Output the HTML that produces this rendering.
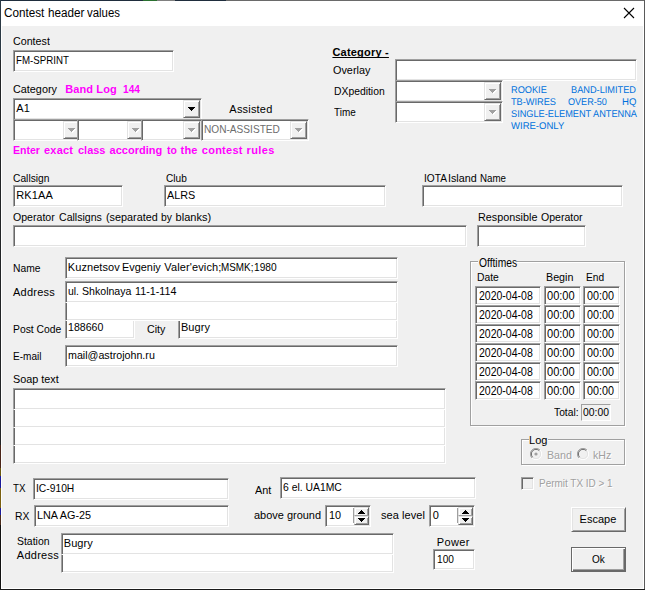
<!DOCTYPE html>
<html lang="en"><head><meta charset="utf-8"><title>Contest header values</title>
<style>
html,body{margin:0;padding:0;}
body{width:645px;height:590px;overflow:hidden;background:#f0f0f0;font-family:"Liberation Sans",Arial,sans-serif;}
#win{position:absolute;left:0;top:0;width:645px;height:590px;background:#f0f0f0;overflow:hidden;}
#win div,#win span,#win svg{position:absolute;box-sizing:border-box;}
.t{white-space:pre;color:#000;}
.mag{color:#ff00ff;}
.blue{color:#0070dc;text-rendering:geometricPrecision;}
.dis{color:#6d6d6d;}
.gray{color:#a0a0a0;text-shadow:1px 1px 0 #fff;}
.ul{text-decoration:underline;text-decoration-skip-ink:none;}
.title{color:#000;}
.inp{background:#fff;border:1px solid;border-color:#a0a0a0 #fff #fff #a0a0a0;box-shadow:inset 1px 1px 0 #696969,inset -1px -1px 0 #e3e3e3;}
.nt{background:#fff;border:1px solid;border-top:none;border-color:#a0a0a0 #fff #fff #a0a0a0;box-shadow:inset 1px 0 0 #696969,inset -1px -1px 0 #e3e3e3;}
.ro{background:#f0f0f0;}
.cb{background:#f0f0f0;border:1px solid;border-color:#e3e3e3 #696969 #696969 #e3e3e3;box-shadow:inset 1px 1px 0 #fff,inset -1px -1px 0 #a0a0a0;}
.btn{background:#f0f0f0;border:1px solid;border-color:#fff #696969 #696969 #fff;box-shadow:inset 1px 1px 0 #e3e3e3,inset -1px -1px 0 #a0a0a0;}
.grp{border:1px solid #a0a0a0;box-shadow:inset 1px 1px 0 #fff,1px 1px 0 #fff;}
.gl{background:#f0f0f0;}
.tb{background:#fff;}
.s1{background:#f0f0f0;border:1px solid;border-color:#a0a0a0 #fff #fff #a0a0a0;}
.btnd{background:#f0f0f0;border:1px solid #696969;box-shadow:inset 1px 1px 0 #fff,inset -1px -1px 0 #696969,inset -2px -2px 0 #a0a0a0;}
.cbu{background:#f0f0f0;border:1px solid;border-color:#e3e3e3 #696969 #a0a0a0 #e3e3e3;box-shadow:inset 1px 1px 0 #fff,inset -1px 0 0 #a0a0a0;}

</style></head>
<body>
<div id="win">
<div class="inp" style="left:13px;top:50px;width:161px;height:22px;"></div>
<div class="tb" style="left:0;top:0;width:645px;height:26px;"></div>
<div style="left:1px;top:1px;width:1px;height:588px;background:#fff"></div>
<div style="left:643px;top:1px;width:1px;height:588px;background:#fff"></div>
<div style="left:1px;top:588px;width:643px;height:1px;background:#fff"></div>
<div style="left:0;top:0;width:645px;height:1px;background:linear-gradient(90deg,#1f2d3d 0,#1f2d3d 143px,#2a7030 143px,#2a7030 157px,#808080 157px,#808080 175px,#1f2d3d 175px,#1f2d3d 226px,#6a6a6a 226px,#6a6a6a 645px)"></div>
<div style="left:0;top:0;width:1px;height:590px;background:linear-gradient(180deg,#2b3944 0px,#2b3944 60px,#222426 60px,#222426 445px,#4a2418 445px,#4a2418 468px,#6b5a10 468px,#6b5a10 476px,#1a1a9a 476px,#1a1a9a 488px,#7a6010 488px,#7a6010 508px,#1a1a9a 508px,#1a1a9a 515px,#4a2a1a 515px,#4a2a1a 525px,#101010 525px,#101010 590px)"></div>
<div style="left:644px;top:0;width:1px;height:590px;background:#5a5a5a"></div>
<div style="left:0;top:589px;width:645px;height:1px;background:#1a1a1a"></div>
<svg style="left:623px;top:7px" width="12" height="12" viewBox="0 0 12 12"><path d="M1 1L11 11M11 1L1 11" stroke="#000" stroke-width="1.1" fill="none"/></svg>
<div class="inp" style="left:13px;top:98px;width:189px;height:22px;"></div>
<div class="cb" style="left:183px;top:100px;width:17px;height:18px;"></div>
<svg style="left:188px;top:107px" width="8" height="5" viewBox="0 0 8 5" shape-rendering="crispEdges"><path d="M0 0h7v1h-1v1h-1v1h-1v1h-1v-1h-1v-1h-1v-1h-1z" fill="#000"/></svg>
<div class="inp" style="left:13px;top:119px;width:69px;height:22px;"></div>
<div class="cb" style="left:63px;top:121px;width:17px;height:18px;"></div>
<svg style="left:68px;top:128px" width="8" height="5" viewBox="0 0 8 5" shape-rendering="crispEdges"><path transform="translate(1,1)" d="M0 0h7v1h-1v1h-1v1h-1v1h-1v-1h-1v-1h-1v-1h-1z" fill="#fff"/><path d="M0 0h7v1h-1v1h-1v1h-1v1h-1v-1h-1v-1h-1v-1h-1z" fill="#a0a0a0"/></svg>
<div class="inp" style="left:77px;top:119px;width:69px;height:22px;"></div>
<div class="cb" style="left:127px;top:121px;width:17px;height:18px;"></div>
<svg style="left:132px;top:128px" width="8" height="5" viewBox="0 0 8 5" shape-rendering="crispEdges"><path transform="translate(1,1)" d="M0 0h7v1h-1v1h-1v1h-1v1h-1v-1h-1v-1h-1v-1h-1z" fill="#fff"/><path d="M0 0h7v1h-1v1h-1v1h-1v1h-1v-1h-1v-1h-1v-1h-1z" fill="#a0a0a0"/></svg>
<div class="inp" style="left:141px;top:119px;width:61px;height:22px;"></div>
<div class="cb" style="left:183px;top:121px;width:17px;height:18px;"></div>
<svg style="left:188px;top:128px" width="8" height="5" viewBox="0 0 8 5" shape-rendering="crispEdges"><path transform="translate(1,1)" d="M0 0h7v1h-1v1h-1v1h-1v1h-1v-1h-1v-1h-1v-1h-1z" fill="#fff"/><path d="M0 0h7v1h-1v1h-1v1h-1v1h-1v-1h-1v-1h-1v-1h-1z" fill="#a0a0a0"/></svg>
<div class="inp" style="left:201px;top:119px;width:108px;height:22px;"></div>
<div class="cb" style="left:290px;top:121px;width:17px;height:18px;"></div>
<svg style="left:295px;top:128px" width="8" height="5" viewBox="0 0 8 5" shape-rendering="crispEdges"><path transform="translate(1,1)" d="M0 0h7v1h-1v1h-1v1h-1v1h-1v-1h-1v-1h-1v-1h-1z" fill="#fff"/><path d="M0 0h7v1h-1v1h-1v1h-1v1h-1v-1h-1v-1h-1v-1h-1z" fill="#a0a0a0"/></svg>
<div class="inp" style="left:395px;top:59px;width:242px;height:22px;"></div>
<div class="inp" style="left:395px;top:80px;width:108px;height:22px;"></div>
<div class="cb" style="left:484px;top:82px;width:17px;height:18px;"></div>
<svg style="left:489px;top:89px" width="8" height="5" viewBox="0 0 8 5" shape-rendering="crispEdges"><path transform="translate(1,1)" d="M0 0h7v1h-1v1h-1v1h-1v1h-1v-1h-1v-1h-1v-1h-1z" fill="#fff"/><path d="M0 0h7v1h-1v1h-1v1h-1v1h-1v-1h-1v-1h-1v-1h-1z" fill="#a0a0a0"/></svg>
<div class="inp" style="left:395px;top:101px;width:108px;height:22px;"></div>
<div class="cb" style="left:484px;top:103px;width:17px;height:18px;"></div>
<svg style="left:489px;top:110px" width="8" height="5" viewBox="0 0 8 5" shape-rendering="crispEdges"><path transform="translate(1,1)" d="M0 0h7v1h-1v1h-1v1h-1v1h-1v-1h-1v-1h-1v-1h-1z" fill="#fff"/><path d="M0 0h7v1h-1v1h-1v1h-1v1h-1v-1h-1v-1h-1v-1h-1z" fill="#a0a0a0"/></svg>
<div class="inp" style="left:13px;top:185px;width:110px;height:22px;"></div>
<div class="inp" style="left:164px;top:185px;width:222px;height:22px;"></div>
<div class="inp" style="left:422px;top:185px;width:201px;height:22px;"></div>
<div class="inp" style="left:13px;top:225px;width:454px;height:22px;"></div>
<div class="inp" style="left:477px;top:225px;width:109px;height:22px;"></div>
<div class="inp" style="left:65px;top:257px;width:333px;height:22px;"></div>
<div class="inp" style="left:65px;top:281px;width:333px;height:22px;"></div>
<div class="nt" style="left:65px;top:303px;width:333px;height:18px;"></div>
<div class="nt" style="left:65px;top:321px;width:70px;height:18px;"></div>
<div class="nt" style="left:178px;top:321px;width:220px;height:18px;"></div>
<div class="inp" style="left:65px;top:345px;width:333px;height:22px;"></div>
<div class="inp" style="left:13px;top:388px;width:433px;height:22px;"></div>
<div class="nt" style="left:13px;top:410px;width:433px;height:18px;"></div>
<div class="nt" style="left:13px;top:428px;width:433px;height:18px;"></div>
<div class="nt" style="left:13px;top:446px;width:433px;height:18px;"></div>
<div class="inp" style="left:33px;top:478px;width:196px;height:22px;"></div>
<div class="inp" style="left:34px;top:505px;width:195px;height:22px;"></div>
<div class="inp" style="left:61px;top:533px;width:333px;height:22px;"></div>
<div class="nt" style="left:61px;top:555px;width:333px;height:18px;"></div>
<div class="inp" style="left:280px;top:477px;width:196px;height:22px;"></div>
<div class="inp" style="left:325px;top:505px;width:46px;height:22px;"></div>
<div class="cbu" style="left:354px;top:507px;width:15px;height:9px;"></div>
<div class="cb" style="left:354px;top:516px;width:15px;height:9px;"></div>
<div style="left:353px;top:508px;width:1px;height:15px;background:#a0a0a0"></div>
<svg style="left:358px;top:510px" width="7" height="4" viewBox="0 0 7 4" shape-rendering="crispEdges"><path d="M3 0h1v1h1v1h1v1h1v1h-7v-1h1v-1h1v-1h1z" fill="#000"/></svg>
<svg style="left:358px;top:518px" width="7" height="4" viewBox="0 0 7 4" shape-rendering="crispEdges"><path d="M0 0h7v1h-1v1h-1v1h-1v1h-1v-1h-1v-1h-1v-1h-1z" fill="#000"/></svg>
<div class="inp" style="left:429px;top:505px;width:46px;height:22px;"></div>
<div class="cbu" style="left:458px;top:507px;width:15px;height:9px;"></div>
<div class="cb" style="left:458px;top:516px;width:15px;height:9px;"></div>
<div style="left:457px;top:508px;width:1px;height:15px;background:#a0a0a0"></div>
<svg style="left:462px;top:510px" width="7" height="4" viewBox="0 0 7 4" shape-rendering="crispEdges"><path d="M3 0h1v1h1v1h1v1h1v1h-7v-1h1v-1h1v-1h1z" fill="#000"/></svg>
<svg style="left:462px;top:518px" width="7" height="4" viewBox="0 0 7 4" shape-rendering="crispEdges"><path d="M0 0h7v1h-1v1h-1v1h-1v1h-1v-1h-1v-1h-1v-1h-1z" fill="#000"/></svg>
<div class="inp" style="left:433px;top:549px;width:42px;height:21px;"></div>
<div class="grp" style="left:470px;top:261px;width:155px;height:165px"></div>
<div class="gl" style="left:478px;top:258px;width:39px;height:8px"></div>
<div class="inp" style="left:475px;top:286px;width:66px;height:19px;"></div>
<div class="inp" style="left:544px;top:286px;width:37px;height:19px;"></div>
<div class="inp" style="left:583px;top:286px;width:37px;height:19px;"></div>
<div class="inp" style="left:475px;top:305px;width:66px;height:19px;"></div>
<div class="inp" style="left:544px;top:305px;width:37px;height:19px;"></div>
<div class="inp" style="left:583px;top:305px;width:37px;height:19px;"></div>
<div class="inp" style="left:475px;top:324px;width:66px;height:19px;"></div>
<div class="inp" style="left:544px;top:324px;width:37px;height:19px;"></div>
<div class="inp" style="left:583px;top:324px;width:37px;height:19px;"></div>
<div class="inp" style="left:475px;top:343px;width:66px;height:19px;"></div>
<div class="inp" style="left:544px;top:343px;width:37px;height:19px;"></div>
<div class="inp" style="left:583px;top:343px;width:37px;height:19px;"></div>
<div class="inp" style="left:475px;top:362px;width:66px;height:19px;"></div>
<div class="inp" style="left:544px;top:362px;width:37px;height:19px;"></div>
<div class="inp" style="left:583px;top:362px;width:37px;height:19px;"></div>
<div class="inp" style="left:475px;top:381px;width:66px;height:19px;"></div>
<div class="inp" style="left:544px;top:381px;width:37px;height:19px;"></div>
<div class="inp" style="left:583px;top:381px;width:37px;height:19px;"></div>
<div class="s1" style="left:581px;top:404px;width:30px;height:17px;"></div>
<div class="grp" style="left:521px;top:439px;width:104px;height:26px"></div>
<div class="gl" style="left:529px;top:436px;width:19px;height:8px"></div>
<svg style="left:530px;top:448px" width="12" height="12" viewBox="0 0 12 12"><circle cx="6" cy="6" r="5.5" fill="#f0f0f0"/><path d="M10 2A5.5 5.5 0 1 0 2 10" stroke="#a0a0a0" stroke-width="1" fill="none"/><path d="M10 2A5.5 5.5 0 0 1 2 10" stroke="#fff" stroke-width="1" fill="none"/><path d="M9.3 2.7A4.5 4.5 0 1 0 2.7 9.3" stroke="#696969" stroke-width="1" fill="none"/><path d="M9.3 2.7A4.5 4.5 0 0 1 2.7 9.3" stroke="#e3e3e3" stroke-width="1" fill="none"/><circle cx="6" cy="6" r="1.6" fill="#a0a0a0"/></svg>
<svg style="left:577px;top:448px" width="12" height="12" viewBox="0 0 12 12"><circle cx="6" cy="6" r="5.5" fill="#f0f0f0"/><path d="M10 2A5.5 5.5 0 1 0 2 10" stroke="#a0a0a0" stroke-width="1" fill="none"/><path d="M10 2A5.5 5.5 0 0 1 2 10" stroke="#fff" stroke-width="1" fill="none"/><path d="M9.3 2.7A4.5 4.5 0 1 0 2.7 9.3" stroke="#696969" stroke-width="1" fill="none"/><path d="M9.3 2.7A4.5 4.5 0 0 1 2.7 9.3" stroke="#e3e3e3" stroke-width="1" fill="none"/></svg>
<div class="inp ro" style="left:521px;top:477px;width:13px;height:13px;"></div>
<div class="btn" style="left:571px;top:507px;width:55px;height:25px;"></div>
<div class="btnd" style="left:571px;top:547px;width:55px;height:25px;"></div>
<span class="t" style="left:16.32px;top:53px;font-size:11px;line-height:14px;transform:scaleX(0.8819);transform-origin:0 0;">FM-SPRINT</span>
<span class="t" style="left:13.28px;top:34px;font-size:11px;line-height:14px;transform:scaleX(0.9725);transform-origin:0 0;">Contest</span>
<span class="t title" style="left:4.05px;top:6px;font-size:12px;line-height:15px;transform:scaleX(0.9757);transform-origin:0 0;">Contest</span>
<span class="t title" style="left:47.52px;top:6px;font-size:12px;line-height:15px;transform:scaleX(0.9750);transform-origin:0 0;">header</span>
<span class="t title" style="left:86.87px;top:6px;font-size:12px;line-height:15px;transform:scaleX(0.9500);transform-origin:0 0;">values</span>
<span class="t" style="left:12.98px;top:82px;font-size:11px;line-height:14px;transform:scaleX(0.9838);transform-origin:0 0;">Category</span>
<span class="t mag" style="left:65.14px;top:82px;font-size:11px;line-height:14px;font-weight:bold;letter-spacing:0.123px;">Band Log</span>
<span class="t mag" style="left:122.64px;top:82px;font-size:11px;line-height:14px;font-weight:bold;transform:scaleX(0.9210);transform-origin:0 0;">144</span>
<span class="t" style="left:16.36px;top:101px;font-size:11px;line-height:14px;">A1</span>
<span class="t" style="left:229.36px;top:102px;font-size:11px;line-height:14px;letter-spacing:0.191px;">Assisted</span>
<span class="t dis" style="left:203.88px;top:122px;font-size:11px;line-height:14px;transform:scaleX(0.9201);transform-origin:0 0;">NON-ASSISTED</span>
<span class="t mag" style="left:13.17px;top:143px;font-size:11px;line-height:14px;font-weight:bold;transform:scaleX(0.9588);transform-origin:0 0;">Enter</span>
<span class="t mag" style="left:44.10px;top:143px;font-size:11px;line-height:14px;font-weight:bold;letter-spacing:0.150px;">exact</span>
<span class="t mag" style="left:77.80px;top:143px;font-size:11px;line-height:14px;font-weight:bold;transform:scaleX(0.9957);transform-origin:0 0;">class</span>
<span class="t mag" style="left:109.50px;top:143px;font-size:11px;line-height:14px;font-weight:bold;letter-spacing:0.029px;">according</span>
<span class="t mag" style="left:166.50px;top:143px;font-size:11px;line-height:14px;font-weight:bold;transform:scaleX(0.9505);transform-origin:0 0;">to</span>
<span class="t mag" style="left:180.50px;top:143px;font-size:11px;line-height:14px;font-weight:bold;letter-spacing:0.215px;">the</span>
<span class="t mag" style="left:201.80px;top:143px;font-size:11px;line-height:14px;font-weight:bold;letter-spacing:0.250px;">contest</span>
<span class="t mag" style="left:246.52px;top:143px;font-size:11px;line-height:14px;font-weight:bold;letter-spacing:0.369px;">rules</span>
<span class="t ul" style="left:332.43px;top:45px;font-size:11px;line-height:14px;font-weight:bold;letter-spacing:0.208px;">Category -</span>
<span class="t" style="left:333.34px;top:63px;font-size:11px;line-height:14px;transform:scaleX(0.9856);transform-origin:0 0;">Overlay</span>
<span class="t" style="left:334.06px;top:84px;font-size:11px;line-height:14px;transform:scaleX(0.9417);transform-origin:0 0;">DXpedition</span>
<span class="t" style="left:334.18px;top:105px;font-size:11px;line-height:14px;transform:scaleX(0.9039);transform-origin:0 0;">Time</span>
<span class="t blue" style="left:511.16px;top:85.0px;font-size:9.8px;line-height:12.8px;transform:scaleX(0.9390);transform-origin:0 0;">ROOKIE</span>
<span class="t blue" style="left:570.86px;top:85.0px;font-size:9.8px;line-height:12.8px;transform:scaleX(0.9399);transform-origin:0 0;">BAND-LIMITED</span>
<span class="t blue" style="left:511.40px;top:97.0px;font-size:9.8px;line-height:12.8px;transform:scaleX(0.9399);transform-origin:0 0;">TB-WIRES</span>
<span class="t blue" style="left:568.42px;top:97.0px;font-size:9.8px;line-height:12.8px;transform:scaleX(0.9249);transform-origin:0 0;">OVER-50</span>
<span class="t blue" style="left:622.02px;top:97.0px;font-size:9.8px;line-height:12.8px;transform:scaleX(0.9756);transform-origin:0 0;">HQ</span>
<span class="t blue" style="left:511.26px;top:109.0px;font-size:9.8px;line-height:12.8px;transform:scaleX(0.9380);transform-origin:0 0;">SINGLE-ELEMENT ANTENNA</span>
<span class="t blue" style="left:510.77px;top:121.0px;font-size:9.8px;line-height:12.8px;transform:scaleX(0.9714);transform-origin:0 0;">WIRE-ONLY</span>
<span class="t" style="left:13.31px;top:171px;font-size:11px;line-height:14px;transform:scaleX(0.9327);transform-origin:0 0;">Callsign</span>
<span class="t" style="left:16.20px;top:188px;font-size:11px;line-height:14px;letter-spacing:0.133px;">RK1AA</span>
<span class="t" style="left:166.21px;top:171px;font-size:11px;line-height:14px;transform:scaleX(0.9181);transform-origin:0 0;">Club</span>
<span class="t" style="left:166.96px;top:188px;font-size:11px;line-height:14px;transform:scaleX(0.9841);transform-origin:0 0;">ALRS</span>
<span class="t" style="left:423.84px;top:171px;font-size:11px;line-height:14px;transform:scaleX(0.9207);transform-origin:0 0;">IOTA</span>
<span class="t" style="left:448.48px;top:171px;font-size:11px;line-height:14px;transform:scaleX(0.9772);transform-origin:0 0;">Island</span>
<span class="t" style="left:480.31px;top:171px;font-size:11px;line-height:14px;transform:scaleX(0.8857);transform-origin:0 0;">Name</span>
<span class="t" style="left:13.35px;top:210px;font-size:11px;line-height:14px;transform:scaleX(0.9615);transform-origin:0 0;">Operator</span>
<span class="t" style="left:58.99px;top:210px;font-size:11px;line-height:14px;transform:scaleX(0.9600);transform-origin:0 0;">Callsigns</span>
<span class="t" style="left:105.55px;top:210px;font-size:11px;line-height:14px;transform:scaleX(0.9836);transform-origin:0 0;">(separated</span>
<span class="t" style="left:160.88px;top:210px;font-size:11px;line-height:14px;transform:scaleX(0.9418);transform-origin:0 0;">by</span>
<span class="t" style="left:175.54px;top:210px;font-size:11px;line-height:14px;letter-spacing:0.048px;">blanks)</span>
<span class="t" style="left:477.82px;top:210px;font-size:11px;line-height:14px;transform:scaleX(0.9814);transform-origin:0 0;">Responsible</span>
<span class="t" style="left:540.75px;top:210px;font-size:11px;line-height:14px;transform:scaleX(0.9592);transform-origin:0 0;">Operator</span>
<span class="t" style="left:12.86px;top:261px;font-size:11px;line-height:14px;transform:scaleX(0.9357);transform-origin:0 0;">Name</span>
<span class="t" style="left:67.80px;top:260px;font-size:11px;line-height:14px;letter-spacing:0.070px;">Kuznetsov</span>
<span class="t" style="left:122.11px;top:260px;font-size:11px;line-height:14px;transform:scaleX(0.9914);transform-origin:0 0;">Evgeniy</span>
<span class="t" style="left:164.32px;top:260px;font-size:11px;line-height:14px;letter-spacing:0.121px;">Valer&#x27;evich;</span>
<span class="t" style="left:220.60px;top:260px;font-size:11px;line-height:14px;transform:scaleX(0.8980);transform-origin:0 0;">MSMK;</span>
<span class="t" style="left:253.90px;top:260px;font-size:11px;line-height:14px;transform:scaleX(0.9240);transform-origin:0 0;">1980</span>
<span class="t" style="left:13.06px;top:285px;font-size:11px;line-height:14px;letter-spacing:0.241px;">Address</span>
<span class="t" style="left:68.19px;top:284px;font-size:11px;line-height:14px;transform:scaleX(0.9486);transform-origin:0 0;">ul.</span>
<span class="t" style="left:81.56px;top:284px;font-size:11px;line-height:14px;transform:scaleX(0.9623);transform-origin:0 0;">Shkolnaya</span>
<span class="t" style="left:135.04px;top:284px;font-size:11px;line-height:14px;transform:scaleX(0.9752);transform-origin:0 0;">11-1-114</span>
<span class="t" style="left:12.96px;top:322px;font-size:11px;line-height:14px;transform:scaleX(0.9420);transform-origin:0 0;">Post Code</span>
<span class="t" style="left:68.46px;top:320px;font-size:11px;line-height:14px;transform:scaleX(0.9613);transform-origin:0 0;">188660</span>
<span class="t" style="left:146.69px;top:322px;font-size:11px;line-height:14px;transform:scaleX(0.9687);transform-origin:0 0;">City</span>
<span class="t" style="left:180.90px;top:320px;font-size:11px;line-height:14px;letter-spacing:0.089px;">Bugry</span>
<span class="t" style="left:12.99px;top:349px;font-size:11px;line-height:14px;transform:scaleX(0.9135);transform-origin:0 0;">E-mail</span>
<span class="t" style="left:68.44px;top:348px;font-size:11px;line-height:14px;transform:scaleX(0.9710);transform-origin:0 0;">mail@astrojohn.ru</span>
<span class="t" style="left:13.14px;top:372px;font-size:11px;line-height:14px;transform:scaleX(0.9852);transform-origin:0 0;">Soap text</span>
<span class="t" style="left:13.48px;top:481px;font-size:11px;line-height:14px;transform:scaleX(0.8877);transform-origin:0 0;">TX</span>
<span class="t" style="left:35.83px;top:481px;font-size:11px;line-height:14px;transform:scaleX(0.9343);transform-origin:0 0;">IC-910H</span>
<span class="t" style="left:15.26px;top:509px;font-size:11px;line-height:14px;transform:scaleX(0.9414);transform-origin:0 0;">RX</span>
<span class="t" style="left:36.82px;top:508px;font-size:11px;line-height:14px;transform:scaleX(0.9830);transform-origin:0 0;">LNA AG-25</span>
<span class="t" style="left:17.17px;top:534px;font-size:11px;line-height:14px;transform:scaleX(0.9495);transform-origin:0 0;">Station</span>
<span class="t" style="left:16.86px;top:548px;font-size:11px;line-height:14px;letter-spacing:0.257px;">Address</span>
<span class="t" style="left:63.80px;top:536px;font-size:11px;line-height:14px;letter-spacing:0.039px;">Bugry</span>
<span class="t" style="left:255.36px;top:483px;font-size:11px;line-height:14px;transform:scaleX(0.9875);transform-origin:0 0;">Ant</span>
<span class="t" style="left:283.31px;top:480px;font-size:11px;line-height:14px;transform:scaleX(0.9428);transform-origin:0 0;">6 el. UA1MC</span>
<span class="t" style="left:254.35px;top:508px;font-size:11px;line-height:14px;transform:scaleX(0.9967);transform-origin:0 0;">above ground</span>
<span class="t" style="left:380.97px;top:508px;font-size:11px;line-height:14px;letter-spacing:0.058px;">sea level</span>
<span class="t" style="left:328.63px;top:508px;font-size:11px;line-height:14px;transform:scaleX(0.9874);transform-origin:0 0;">10</span>
<span class="t" style="left:432.79px;top:508px;font-size:11px;line-height:14px;">0</span>
<span class="t" style="left:436.80px;top:535px;font-size:11px;line-height:14px;letter-spacing:0.332px;">Power</span>
<span class="t" style="left:437.10px;top:552px;font-size:11px;line-height:14px;transform:scaleX(0.9207);transform-origin:0 0;">100</span>
<span class="t" style="left:478.57px;top:256px;font-size:12px;line-height:15px;transform:scaleX(0.8552);transform-origin:0 0;">Offtimes</span>
<span class="t" style="left:476.96px;top:270px;font-size:11px;line-height:14px;transform:scaleX(0.9399);transform-origin:0 0;">Date</span>
<span class="t" style="left:546.13px;top:270px;font-size:11px;line-height:14px;transform:scaleX(0.9741);transform-origin:0 0;">Begin</span>
<span class="t" style="left:585.77px;top:270px;font-size:11px;line-height:14px;transform:scaleX(0.9278);transform-origin:0 0;">End</span>
<span class="t" style="left:478.61px;top:289px;font-size:12px;line-height:15px;transform:scaleX(0.8755);transform-origin:0 0;">2020-04-08</span>
<span class="t" style="left:547.13px;top:289px;font-size:12px;line-height:15px;transform:scaleX(0.9206);transform-origin:0 0;">00:00</span>
<span class="t" style="left:586.64px;top:289px;font-size:12px;line-height:15px;transform:scaleX(0.8966);transform-origin:0 0;">00:00</span>
<span class="t" style="left:478.61px;top:308px;font-size:12px;line-height:15px;transform:scaleX(0.8755);transform-origin:0 0;">2020-04-08</span>
<span class="t" style="left:547.13px;top:308px;font-size:12px;line-height:15px;transform:scaleX(0.9206);transform-origin:0 0;">00:00</span>
<span class="t" style="left:586.64px;top:308px;font-size:12px;line-height:15px;transform:scaleX(0.8966);transform-origin:0 0;">00:00</span>
<span class="t" style="left:478.61px;top:327px;font-size:12px;line-height:15px;transform:scaleX(0.8755);transform-origin:0 0;">2020-04-08</span>
<span class="t" style="left:547.13px;top:327px;font-size:12px;line-height:15px;transform:scaleX(0.9206);transform-origin:0 0;">00:00</span>
<span class="t" style="left:586.64px;top:327px;font-size:12px;line-height:15px;transform:scaleX(0.8966);transform-origin:0 0;">00:00</span>
<span class="t" style="left:478.61px;top:346px;font-size:12px;line-height:15px;transform:scaleX(0.8755);transform-origin:0 0;">2020-04-08</span>
<span class="t" style="left:547.13px;top:346px;font-size:12px;line-height:15px;transform:scaleX(0.9206);transform-origin:0 0;">00:00</span>
<span class="t" style="left:586.64px;top:346px;font-size:12px;line-height:15px;transform:scaleX(0.8966);transform-origin:0 0;">00:00</span>
<span class="t" style="left:478.61px;top:365px;font-size:12px;line-height:15px;transform:scaleX(0.8755);transform-origin:0 0;">2020-04-08</span>
<span class="t" style="left:547.13px;top:365px;font-size:12px;line-height:15px;transform:scaleX(0.9206);transform-origin:0 0;">00:00</span>
<span class="t" style="left:586.64px;top:365px;font-size:12px;line-height:15px;transform:scaleX(0.8966);transform-origin:0 0;">00:00</span>
<span class="t" style="left:478.61px;top:384px;font-size:12px;line-height:15px;transform:scaleX(0.8755);transform-origin:0 0;">2020-04-08</span>
<span class="t" style="left:547.13px;top:384px;font-size:12px;line-height:15px;transform:scaleX(0.9206);transform-origin:0 0;">00:00</span>
<span class="t" style="left:586.64px;top:384px;font-size:12px;line-height:15px;transform:scaleX(0.8966);transform-origin:0 0;">00:00</span>
<span class="t" style="left:553.67px;top:405px;font-size:11px;line-height:14px;transform:scaleX(0.9346);transform-origin:0 0;">Total:</span>
<span class="t" style="left:582.91px;top:405px;font-size:11px;line-height:14px;transform:scaleX(0.9428);transform-origin:0 0;">00:00</span>
<span class="t" style="left:529.00px;top:433px;font-size:11px;line-height:14px;letter-spacing:0.062px;">Log</span>
<span class="t gray" style="left:546.53px;top:448px;font-size:11px;line-height:14px;transform:scaleX(0.9708);transform-origin:0 0;">Band</span>
<span class="t gray" style="left:593.36px;top:448px;font-size:11px;line-height:14px;transform:scaleX(0.9625);transform-origin:0 0;">kHz</span>
<span class="t gray" style="left:538.60px;top:476px;font-size:11px;line-height:14px;transform:scaleX(0.9046);transform-origin:0 0;">Permit TX ID &gt; 1</span>
<span class="t" style="left:579.50px;top:512px;font-size:11px;line-height:14px;letter-spacing:0.040px;">Escape</span>
<span class="t" style="left:592.38px;top:552px;font-size:11px;line-height:14px;transform:scaleX(0.9108);transform-origin:0 0;">Ok</span>
</div>
</body></html>
